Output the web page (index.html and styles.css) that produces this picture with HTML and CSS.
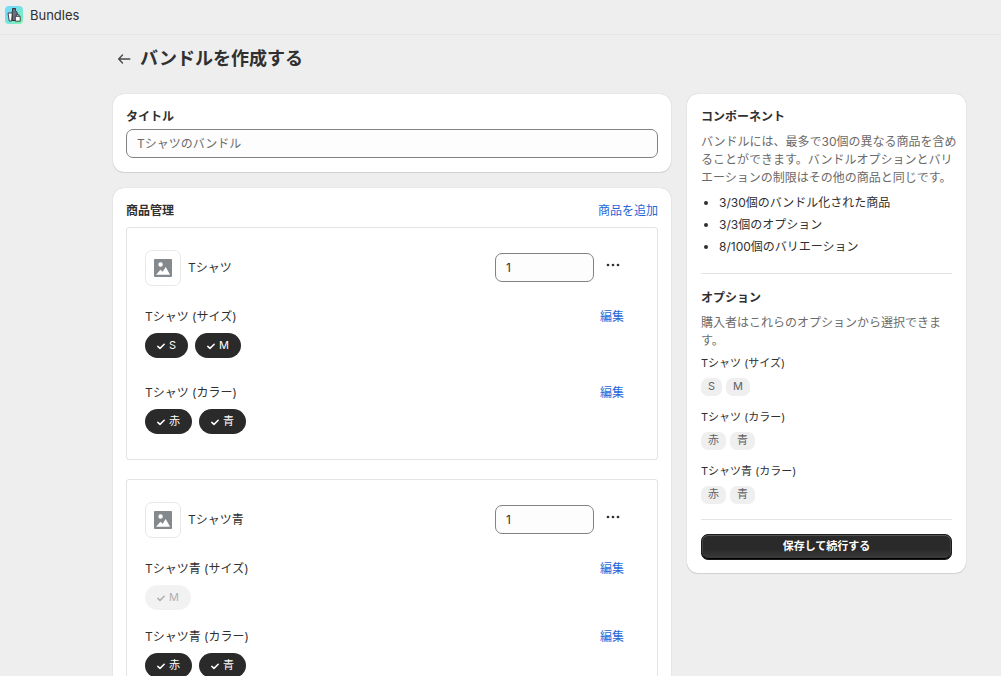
FILE: index.html
```html
<!DOCTYPE html>
<html lang="ja">
<head>
<meta charset="utf-8">
<meta name="viewport" content="width=device-width, initial-scale=1">
<title>Bundles</title>
<link rel="stylesheet" href="styles.css">
</head>
<body>
<svg class="sprite" aria-hidden="true">
  <symbol id="check" viewBox="0 0 10 10"><path d="M1.800 5.400 4 7.400 8.200 3.300" fill="none" stroke="currentColor" stroke-width="1.500" stroke-linecap="round" stroke-linejoin="round"/></symbol>
  <symbol id="image" viewBox="0 0 20 20"><path fill="currentColor" fill-rule="evenodd" d="M1 0h18a1 1 0 0 1 1 1v18a1 1 0 0 1-1 1H1a1 1 0 0 1-1-1V1a1 1 0 0 1 1-1ZM7.300 3.600a2.500 2.500 0 1 0 0 5 2.500 2.500 0 0 0 0-5ZM2.300 17.500h15.600L13 8.800l-3.400 5.400-2.400-2.200Z"/></symbol>
  <symbol id="dots" viewBox="0 0 14 4"><g fill="currentColor"><circle cx="2" cy="2" r="1.350"/><circle cx="7" cy="2" r="1.350"/><circle cx="12" cy="2" r="1.350"/></g></symbol>
</svg>

<header class="topbar">
  <svg class="app-icon" viewBox="0 0 18 18" aria-hidden="true">
    <defs><linearGradient id="sky" x1="0" y1="0" x2="1" y2="1"><stop offset="0.3" stop-color="#74dcf3"/><stop offset="1" stop-color="#7df5a8"/></linearGradient></defs>
    <rect width="18" height="18" rx="4" fill="url(#sky)"/>
    <path d="M7.500 2.500h3v2l1.700 2.300v7.700h-5v-8l.3-2Z" fill="#6c6f80" stroke="#30323c" stroke-width="1"/>
    <path d="M3 7h4.300l-.7 8H4.200Z" fill="#fff" stroke="#30323c" stroke-width="0.900"/>
    <path d="M10.300 10.300h4.900v4.900h-4.900ZM11.300 10.300V8.800h2.700v1.500" fill="#fff" stroke="#30323c" stroke-width="0.900"/>
  </svg>
  <span>Bundles</span>
</header>

<main class="page">
  <div class="page-head">
    <button class="back" type="button" aria-label="戻る">
      <svg viewBox="0 0 14 12" aria-hidden="true"><path d="M5.500 2 1.700 6l3.800 4M2 6h10.800" fill="none" stroke="currentColor" stroke-width="1.400" stroke-linecap="round" stroke-linejoin="round"/></svg>
    </button>
    <h1>バンドルを作成する</h1>
  </div>

  <div class="columns">
    <div class="stack">
      <section class="card">
        <label class="heading title-label" for="bundle-title">タイトル</label>
        <input class="field" id="bundle-title" type="text" placeholder="Tシャツのバンドル">
      </section>

      <section class="card">
        <div class="card-head">
          <h2 class="heading">商品管理</h2>
          <a class="link" href="#">商品を追加</a>
        </div>
        <div class="products">
          <article class="product">
            <div class="product-row">
              <span class="thumb"><svg viewBox="0 0 20 20" aria-hidden="true"><use href="#image"/></svg></span>
              <span class="product-name">Tシャツ</span>
              <input class="field qty" type="text" value="1" aria-label="Tシャツの数量">
              <button class="more" type="button" aria-label="その他の操作"><svg viewBox="0 0 14 4" aria-hidden="true"><use href="#dots"/></svg></button>
            </div>
            <div class="option">
              <div class="option-head"><span>Tシャツ (サイズ)</span><a class="link" href="#">編集</a></div>
              <div class="chips">
                <button class="chip" type="button"><svg viewBox="0 0 10 10" aria-hidden="true"><use href="#check"/></svg><span>S</span></button>
                <button class="chip" type="button"><svg viewBox="0 0 10 10" aria-hidden="true"><use href="#check"/></svg><span>M</span></button>
              </div>
            </div>
            <div class="option">
              <div class="option-head"><span>Tシャツ (カラー)</span><a class="link" href="#">編集</a></div>
              <div class="chips">
                <button class="chip" type="button"><svg viewBox="0 0 10 10" aria-hidden="true"><use href="#check"/></svg><span>赤</span></button>
                <button class="chip" type="button"><svg viewBox="0 0 10 10" aria-hidden="true"><use href="#check"/></svg><span>青</span></button>
              </div>
            </div>
          </article>

          <article class="product">
            <div class="product-row">
              <span class="thumb"><svg viewBox="0 0 20 20" aria-hidden="true"><use href="#image"/></svg></span>
              <span class="product-name">Tシャツ青</span>
              <input class="field qty" type="text" value="1" aria-label="Tシャツ青の数量">
              <button class="more" type="button" aria-label="その他の操作"><svg viewBox="0 0 14 4" aria-hidden="true"><use href="#dots"/></svg></button>
            </div>
            <div class="option option-single">
              <div class="option-head"><span>Tシャツ青 (サイズ)</span><a class="link" href="#">編集</a></div>
              <div class="chips">
                <button class="chip" type="button" disabled><svg viewBox="0 0 10 10" aria-hidden="true"><use href="#check"/></svg><span>M</span></button>
              </div>
            </div>
            <div class="option">
              <div class="option-head"><span>Tシャツ青 (カラー)</span><a class="link" href="#">編集</a></div>
              <div class="chips">
                <button class="chip" type="button"><svg viewBox="0 0 10 10" aria-hidden="true"><use href="#check"/></svg><span>赤</span></button>
                <button class="chip" type="button"><svg viewBox="0 0 10 10" aria-hidden="true"><use href="#check"/></svg><span>青</span></button>
              </div>
            </div>
          </article>
        </div>
      </section>
    </div>

    <aside class="card summary">
      <section class="summary-part">
        <h2 class="heading">コンポーネント</h2>
        <p class="note">バンドルには、最多で30個の異なる商品を含め<br>ることができます。バンドルオプションとバリ<br>エーションの制限はその他の商品と同じです。</p>
        <ul class="limits">
          <li>3/30個のバンドル化された商品</li>
          <li>3/3個のオプション</li>
          <li>8/100個のバリエーション</li>
        </ul>
      </section>
      <section class="summary-part">
        <h2 class="heading">オプション</h2>
        <p class="note">購入者はこれらのオプションから選択できま<br>す。</p>
        <div class="tag-groups">
          <div class="tag-group"><span>Tシャツ (サイズ)</span><div class="tags"><span class="tag">S</span><span class="tag">M</span></div></div>
          <div class="tag-group"><span>Tシャツ (カラー)</span><div class="tags"><span class="tag">赤</span><span class="tag">青</span></div></div>
          <div class="tag-group"><span>Tシャツ青 (カラー)</span><div class="tags"><span class="tag">赤</span><span class="tag">青</span></div></div>
        </div>
      </section>
      <div class="summary-part">
        <button class="save" type="button">保存して続行する</button>
      </div>
    </aside>
  </div>
</main>
</body>
</html>
```

FILE: styles.css
```css
* { box-sizing: border-box; }

body {
  margin: 0;
  background: #eeeeee;
  color: #303030;
  font: 12px/20px Inter, "Noto Sans CJK JP", sans-serif;
}

h1, h2, p, ul { margin: 0; }

button, input { font: inherit; color: inherit; }

button { border: 0; padding: 0; background: none; cursor: pointer; }

svg { display: block; }

.sprite { display: none; }

.topbar {
  display: flex;
  align-items: center;
  gap: 7px;
  height: 35px;
  padding: 0 5px 5px;
  border-bottom: 1px solid #e5e5e5;
  font-size: 13px;
}

.app-icon { width: 18px; height: 18px; }

.page { padding: 10px 35px 16px 113px; }

.page-head {
  display: flex;
  align-items: center;
  gap: 9px;
  padding: 0 4px;
  margin-bottom: 21px;
}

.page-head h1 { font-size: 18px; line-height: 28px; font-weight: 700; }

.back { width: 14px; height: 12px; color: #4a4a4a; }

.columns {
  display: grid;
  grid-template-columns: 2fr 1fr;
  align-items: start;
  gap: 16px;
}

.stack { display: grid; gap: 16px; }

.card {
  min-width: 0;
  padding: 13px 13px 14px;
  background: #fff;
  border-radius: 11px;
  box-shadow: 0 1px 1px rgba(0, 0, 0, 0.1), 0 0 1px rgba(0, 0, 0, 0.25);
}

.heading { font-size: 12px; line-height: 20px; font-weight: 700; }

.title-label { display: block; margin-bottom: 2px; }

.field {
  display: block;
  width: 100%;
  height: 29px;
  padding: 0 10px;
  border: 1px solid #808285;
  border-radius: 7px;
  background: #fdfdfd;
}

.field::placeholder { color: #6b6b6b; opacity: 1; }

.link { color: #1f66d8; text-decoration: none; }

.card-head, .option-head { display: flex; justify-content: space-between; }

.products { display: grid; gap: 19px; margin-top: 6px; }

.product {
  display: grid;
  gap: 25px;
  padding: 22px 33px 25px 18px;
  border: 1px solid #e3e3e3;
  border-radius: 3px;
}

.product-row { display: flex; align-items: center; margin-bottom: -4px; }

.thumb {
  display: grid;
  place-items: center;
  width: 36px;
  height: 36px;
  border: 1px solid #e8e8e8;
  border-radius: 7px;
  color: #84898d;
}

.thumb svg { width: 18px; height: 18px; }

.product-name { flex: 1; padding-left: 7px; }

.qty { width: 99px; margin-bottom: 2px; }

.more { padding: 0 4px 7px 12px; }

.more svg { width: 14px; height: 4px; }

.option-single { margin-bottom: -8px; }

.chips { display: flex; gap: 7px; margin-top: 6px; }

.chip {
  display: flex;
  align-items: center;
  gap: 3px;
  height: 25px;
  padding: 0 12px 0 11px;
  border-radius: 13px;
  background: #2a2a2a;
  color: #fff;
  font-size: 11px;
}

.chip span { padding-bottom: 2px; }

.chip svg { width: 10px; height: 10px; }

.chip:disabled { background: #f2f2f2; color: #b0b0b0; cursor: default; }

.summary { padding: 13px 14px; }

.summary-part + .summary-part {
  margin-top: 15px;
  padding-top: 14px;
  border-top: 1px solid #e3e3e3;
}

.note {
  margin-top: 6px;
  color: #6b6b6b;
  line-height: 18px;
  white-space: nowrap;
}

.limits {
  display: grid;
  gap: 4px;
  margin: 7px 0 17px;
  padding-left: 18px;
  line-height: 18px;
}

.tag-groups { display: grid; gap: 12px; margin-top: 4px; }

.tag-group { font-size: 11px; line-height: 18px; }

.tags { display: flex; gap: 4px; margin-top: 6px; }

.tag {
  padding: 0 7px 2px;
  border-radius: 7px;
  background: #efefef;
  color: #616161;
  line-height: 16px;
}

.save {
  display: block;
  width: 100%;
  height: 26px;
  padding-bottom: 2px;
  border: 1px solid #1a1a1a;
  border-radius: 7px;
  background: linear-gradient(#2a2a2a 60%, #3c3c3c);
  box-shadow: inset 0 1px 0 #555, inset 0 -1px 0 #000, inset 1px 0 0 #444, inset -1px 0 0 #444;
  color: #fff;
  font-size: 11px;
  font-weight: 700;
}
```
